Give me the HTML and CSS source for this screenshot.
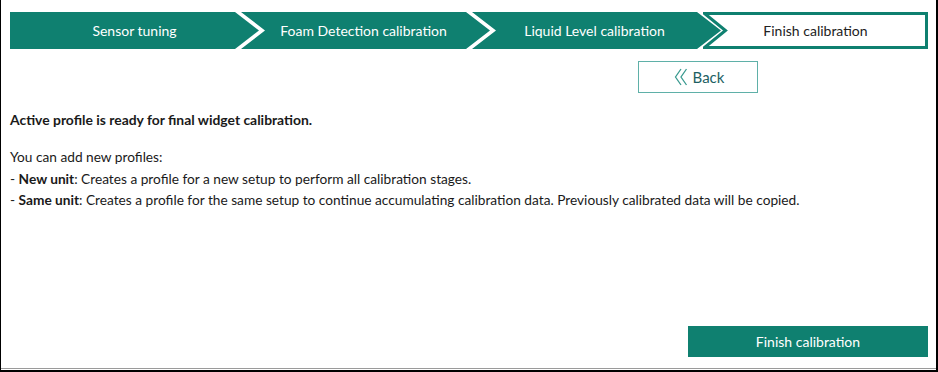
FILE: index.html
```html
<!DOCTYPE html>
<html lang="en">
<head>
<meta charset="utf-8">
<title>Finish calibration</title>
<link rel="stylesheet" href="styles.css">
</head>
<body>
<div class="frame">
  <div class="panel">
    <div class="stepper">
      <div class="step step-first"><span>Sensor tuning</span></div>
      <div class="step step-mid"><span>Foam Detection calibration</span></div>
      <div class="step step-mid"><span>Liquid Level calibration</span></div>
      <div class="step step-last">
        <svg class="step-outline" width="225" height="37" viewBox="0 0 225 37" aria-hidden="true">
          <polygon points="1.5,1.5 223.5,1.5 223.5,35.5 1.5,35.5 22.5,18.5" fill="#fff" stroke="#0f8070" stroke-width="3" stroke-linejoin="miter"/>
        </svg>
        <span>Finish calibration</span>
      </div>
    </div>
    <div class="toolbar">
      <button class="btn-back" type="button">
        <svg width="14" height="18" viewBox="0 0 14 18" aria-hidden="true">
          <path d="M7 1 L1.5 9 L7 17 M12.5 1 L7 9 L12.5 17" fill="none" stroke="#3a9a90" stroke-width="1.3"/>
        </svg>
        <span>Back</span>
      </button>
    </div>
    <div class="content">
      <p class="lead">Active profile is ready for final widget calibration.</p>
      <p class="info">You can add new profiles:<br>
      - <b>New unit</b>: Creates a profile for a new setup to perform all calibration stages.<br>
      - <b>Same unit</b>: Creates a profile for the same setup to continue accumulating calibration data. Previously calibrated data will be copied.</p>
    </div>
    <div class="footer">
      <button class="btn-finish" type="button">Finish calibration</button>
    </div>
  </div>
</div>
</body>
</html>
```
FILE: styles.css
```css
* { box-sizing: border-box; }
html, body { margin: 0; padding: 0; background: #fff; }
body {
  font-family: Lato, "Noto Sans", sans-serif;
  font-size: 14px;
  color: #1a1a1a;
}
.frame {
  width: 938px;
  height: 372px;
  border-left: 1px solid #000;
  border-right: 2px solid #000;
  border-bottom: 2px solid #000;
}
.panel {
  height: 369px;
  border-bottom: 1px solid #9a9a9a;
  padding: 12px 8px 0 9px;
  display: flex;
  flex-direction: column;
}
.stepper {
  display: flex;
  height: 37px;
}
.step {
  position: relative;
  height: 37px;
  width: 249px;
  flex: none;
  display: flex;
  align-items: center;
  justify-content: center;
  background: #0f8070;
  color: #fff;
  font-size: 14px;
}
.step + .step { margin-left: -18px; }
.step-first {
  clip-path: polygon(0 0, calc(100% - 24px) 0, 100% 50%, calc(100% - 24px) 100%, 0 100%);
}
.step-mid {
  clip-path: polygon(0 0, calc(100% - 24px) 0, 100% 50%, calc(100% - 24px) 100%, 0 100%, 24px 50%);
  padding-right: 4px;
}
.step-last {
  width: 225px;
  background: transparent;
  color: #222;
}
.step-outline {
  position: absolute;
  left: 0;
  top: 0;
}
.step-last span { position: relative; }
.toolbar {
  display: flex;
  justify-content: flex-end;
  padding-right: 170px;
  margin-top: 12px;
}
.btn-back {
  width: 120px;
  height: 32px;
  border: 1px solid #5fb0a8;
  background: #fff;
  display: flex;
  align-items: center;
  justify-content: center;
  gap: 5px;
  font-family: inherit;
  font-size: 15px;
  color: #1d5f63;
  padding: 0 0 0 2px;
}
.content { flex: 1; }
.content p { margin: 0; }
.lead {
  font-weight: bold;
  font-size: 13.9px;
  line-height: 21px;
  margin-top: 16px !important;
}
.info {
  font-size: 13.7px;
  line-height: 21.5px;
  margin-top: 16px !important;
}
.footer {
  display: flex;
  justify-content: flex-end;
  padding-bottom: 11px;
}
.btn-finish {
  width: 240px;
  height: 31px;
  border: 0;
  background: #0f8070;
  color: #fff;
  font-family: inherit;
  font-size: 14px;
}
```
